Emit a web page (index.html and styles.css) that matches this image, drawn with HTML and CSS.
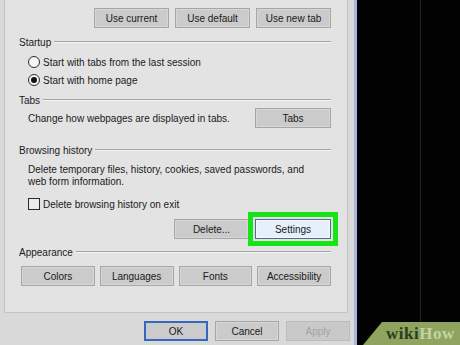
FILE: index.html
```html
<!DOCTYPE html>
<html lang="en">

<head>
    <meta charset="UTF-8">
    <meta name="viewport" content="width=device-width, initial-scale=1.0">
    <title>Internet Options</title>
    <link rel="stylesheet" href="styles.css">
</head>

<body>
    <div class="tela">
        <div class="dialogo">
            <div class="painel">
                <div class="linhaBotoes topo">
                    <button class="botao">Use current</button>
                    <button class="botao">Use default</button>
                    <button class="botao">Use new tab</button>
                </div>

                <div class="grupo">
                    <span>Startup</span>
                    <div class="traco"></div>
                </div>
                <div class="opcao">
                    <span class="radio"></span>
                    Start with tabs from the last session
                </div>
                <div class="opcao">
                    <span class="radio marcado"></span>
                    Start with home page
                </div>

                <div class="grupo tabsGrupo">
                    <span>Tabs</span>
                    <div class="traco"></div>
                </div>
                <div class="linhaTabs">
                    <span class="texto">Change how webpages are displayed in tabs.</span>
                    <button class="botao">Tabs</button>
                </div>

                <div class="grupo historicoGrupo">
                    <span>Browsing history</span>
                    <div class="traco"></div>
                </div>
                <div class="texto descricao">
                    Delete temporary files, history, cookies, saved passwords, and<br>
                    web form information.
                </div>
                <div class="opcao checkLinha">
                    <span class="check"></span>
                    Delete browsing history on exit
                </div>
                <div class="linhaBotoes historico">
                    <button class="botao">Delete...</button>
                    <button class="botao destaque">Settings</button>
                </div>

                <div class="grupo aparenciaGrupo">
                    <span>Appearance</span>
                    <div class="traco"></div>
                </div>
                <div class="aparencia">
                    <button class="botao">Colors</button>
                    <button class="botao">Languages</button>
                    <button class="botao">Fonts</button>
                    <button class="botao">Accessibility</button>
                </div>
            </div>

            <div class="rodape">
                <button class="botao ok">OK</button>
                <button class="botao">Cancel</button>
                <button class="botao desativado">Apply</button>
            </div>
        </div>

        <div class="desktop">
            <div class="brilho"></div>
        </div>

        <div class="wikihow"><span class="wiki">wiki</span><span class="how">How</span></div>
    </div>
</body>

</html>
```

FILE: styles.css
```css
* {
    margin: 0;
    padding: 0;
    box-sizing: border-box;
}

body {
    background-color: #020202;
    font-family: "Liberation Sans", Arial, sans-serif;
    font-size: 10px;
    color: #1a1a1a;
    overflow: hidden;
}

.tela {
    position: relative;
    display: flex;
    width: 460px;
    height: 345px;
}

.dialogo {
    width: 357px;
    height: 345px;
    background-color: #d9d9d9;
    border-right: 3px solid #a9b6de;
    padding-left: 4px;
}

.painel {
    width: 344px;
    height: 313px;
    background-color: #e3e3e3;
    border: 1px solid #c4c4c4;
    border-top: 0;
    padding: 8px 16px 0 14px;
}

.botao {
    height: 20px;
    width: 75px;
    font-family: inherit;
    font-size: 10px;
    color: #1a1a1a;
    background-color: #cbcbcb;
    border: 1px solid #a6a6a6;
    box-shadow: inset 0 0 0 1px #d6d6d6;
}

.linhaBotoes {
    display: flex;
    justify-content: flex-end;
    gap: 6px;
}

.grupo {
    display: flex;
    align-items: center;
    gap: 3px;
    height: 12px;
    margin-top: 8px;
}

.traco {
    flex: 1;
    border-top: 1px solid #a3a3a3;
    border-bottom: 1px solid #f4f4f4;
}

.opcao {
    display: flex;
    align-items: center;
    gap: 3px;
    height: 18px;
    padding-left: 9px;
}

.radio {
    width: 12px;
    height: 12px;
    border: 1px solid #2b2b2b;
    border-radius: 50%;
    background-color: #f6f6f6;
    display: flex;
    justify-content: center;
    align-items: center;
}

.radio.marcado::after {
    content: "";
    width: 6px;
    height: 6px;
    border-radius: 50%;
    background-color: #111;
}

.grupo + .opcao {
    margin-top: 5px;
}

.tabsGrupo {
    margin-top: 5px;
}

.linhaTabs {
    display: flex;
    justify-content: space-between;
    align-items: center;
    margin-top: 2px;
    padding-left: 9px;
}

.linhaTabs .botao {
    width: 76px;
}

.historicoGrupo {
    margin-top: 16px;
}

.descricao {
    line-height: 12px;
    margin-top: 8px;
    padding-left: 9px;
}

.checkLinha {
    height: 16px;
    margin-top: 8px;
}

.check {
    width: 12px;
    height: 12px;
    border: 1px solid #2b2b2b;
    background-color: #ececec;
}

.historico {
    margin-top: 7px;
}

.destaque {
    width: 76px;
    background-color: #e6f0fa;
    border-color: #4e6c88;
    box-shadow: inset 0 0 0 1px #f4f9fd;
    outline: 5px solid #17e417;
    outline-offset: 2px;
}

.aparenciaGrupo {
    margin-top: 7px;
}

.aparencia {
    display: grid;
    grid-template-columns: repeat(4, 1fr);
    gap: 5px;
    margin-top: 8px;
    padding-left: 2px;
}

.aparencia .botao {
    width: 100%;
}

.rodape {
    display: flex;
    justify-content: flex-end;
    gap: 7px;
    margin-top: 8px;
    padding-right: 4px;
}

.rodape .botao {
    width: 64px;
}

.ok {
    border: 2px solid #3567c2;
    box-shadow: none;
}

.desativado {
    color: #a2a2a2;
    background-color: #c9c9c9;
    border-color: #bdbdbd;
    box-shadow: none;
}

.desktop {
    flex: 1;
    padding-left: 63px;
}

.brilho {
    width: 1px;
    height: 100%;
    background-color: #1b2536;
}

.wikihow {
    position: absolute;
    right: 0;
    bottom: 0;
    width: 97px;
    height: 23px;
    background-color: #8ea45f;
    clip-path: polygon(19px 0, 100% 0, 100% 100%, 0 100%);
    padding-left: 23px;
    font-family: "Liberation Serif", "Times New Roman", serif;
    font-weight: bold;
    font-size: 17px;
    line-height: 23px;
    letter-spacing: 0.5px;
}

.wiki {
    color: #2b3d22;
}

.how {
    color: #c4d3a6;
}
```
